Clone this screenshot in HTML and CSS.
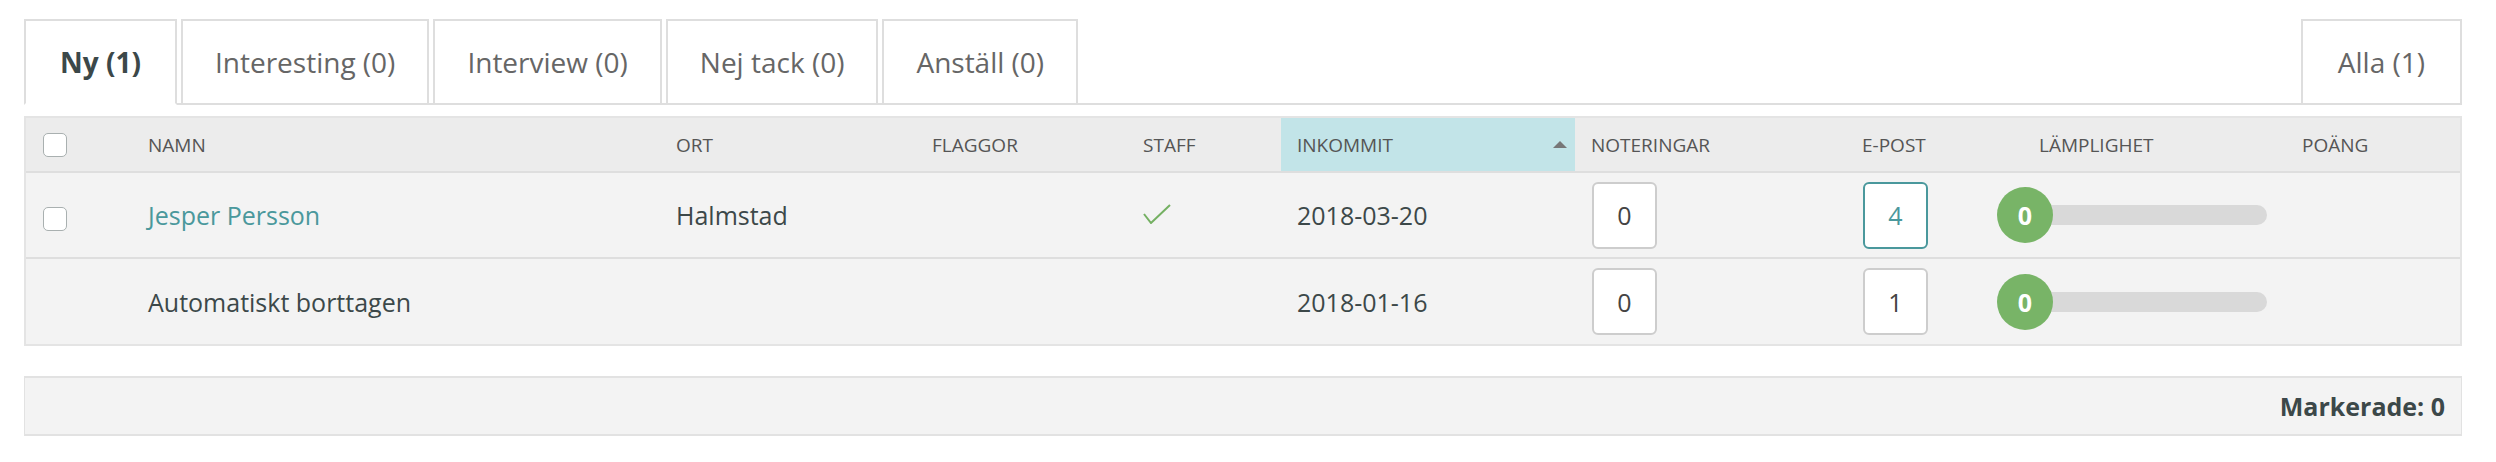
FILE: index.html
```html
<!DOCTYPE html>
<html lang="sv">
<head>
<meta charset="utf-8">
<title>Kandidater</title>
<link rel="stylesheet" href="styles.css">
</head>
<body>
<div class="page">
  <div class="tabs">
    <div class="tab active">Ny (1)</div>
    <div class="tab">Interesting (0)</div>
    <div class="tab">Interview (0)</div>
    <div class="tab">Nej tack (0)</div>
    <div class="tab">Anställ (0)</div>
    <div class="tab-spacer"></div>
    <div class="tab tab-all">Alla (1)</div>
  </div>

  <div class="grid">
    <table>
      <colgroup>
        <col class="w-check"><col class="w-name"><col class="w-ort"><col class="w-flag"><col class="w-staff">
        <col class="w-date"><col class="w-notes"><col class="w-mail"><col class="w-fit"><col class="w-score">
      </colgroup>
      <thead>
        <tr>
          <th class="c-check"><span class="cb"></span></th>
          <th>NAMN</th>
          <th>ORT</th>
          <th>FLAGGOR</th>
          <th>STAFF</th>
          <th class="sorted"><div class="sort-head"><span>INKOMMIT</span><span class="arrow"></span></div></th>
          <th>NOTERINGAR</th>
          <th>E-POST</th>
          <th>LÄMPLIGHET</th>
          <th>POÄNG</th>
        </tr>
      </thead>
      <tbody>
        <tr>
          <td class="c-check"><span class="cb"></span></td>
          <td><a class="name-link" href="#">Jesper Persson</a></td>
          <td>Halmstad</td>
          <td></td>
          <td><svg class="check" width="28" height="20" viewBox="0 0 28 20"><polyline points="1,10 8,19 27,1" fill="none" stroke="#74b062" stroke-width="2"/></svg></td>
          <td>2018-03-20</td>
          <td><span class="count">0</span></td>
          <td><span class="count active">4</span></td>
          <td><div class="meter"><span class="meter-dot">0</span></div></td>
          <td></td>
        </tr>
        <tr>
          <td class="c-check"></td>
          <td>Automatiskt borttagen</td>
          <td></td>
          <td></td>
          <td></td>
          <td>2018-01-16</td>
          <td><span class="count">0</span></td>
          <td><span class="count">1</span></td>
          <td><div class="meter"><span class="meter-dot">0</span></div></td>
          <td></td>
        </tr>
      </tbody>
    </table>
  </div>

  <div class="footer">Markerade: 0</div>
</div>
</body>
</html>
```
FILE: styles.css
```css
* { box-sizing: border-box; }
html, body { margin: 0; background: #fff; }
body {
  font-family: "Open Sans", "Liberation Sans", sans-serif;
  color: #3c4849;
}
.page {
  padding: 19px 34px 0 24px;
}

/* Tabs */
.tabs {
  display: flex;
  align-items: flex-end;
  border-bottom: 2px solid #dedede;
  height: 86px;
}
.tab {
  height: 86px;
  margin-bottom: -2px;
  margin-right: 4px;
  padding: 0 32px;
  border: 2px solid #dedede;
  background: #fff;
  font-size: 28px;
  color: #666;
  display: flex;
  align-items: center;
}
.tab.active {
  padding: 0 34px;
  font-weight: 700;
  color: #3c4849;
  border-bottom-color: #fff;
}
.tab.tab-all { padding: 0 35px; }
.tab:last-child { margin-right: 0; }
.tab-spacer { flex: 1; }

/* Grid */
.grid {
  margin-top: 11px;
  border: 2px solid #e4e4e4;
}
table {
  width: 100%;
  border-collapse: collapse;
  table-layout: fixed;
}
.w-check { width: 106px; }
.w-name { width: 528px; }
.w-ort { width: 256px; }
.w-flag { width: 211px; }
.w-staff { width: 154px; }
.w-date { width: 294px; }
.w-notes { width: 271px; }
.w-mail { width: 177px; }
.w-fit { width: 263px; }
.w-score { width: 174px; }

th {
  height: 54px;
  background: #ececec;
  font-weight: 400;
  font-size: 19px;
  color: #555;
  text-align: left;
  padding: 0 0 0 16px;
  vertical-align: middle;
  border-bottom: 2px solid #dedede;
}
th.sorted { background: #c2e4e8; padding-right: 8px; }
.sort-head {
  display: flex;
  justify-content: space-between;
  align-items: center;
}
.arrow {
  width: 0; height: 0;
  border-left: 7px solid transparent;
  border-right: 7px solid transparent;
  border-bottom: 7px solid #777;
}
td {
  height: 86px;
  background: #f3f3f3;
  font-size: 25px;
  padding: 0 0 0 16px;
  vertical-align: middle;
  border-bottom: 2px solid #dedede;
  color: #3c4849;
}
tbody tr:last-child td { border-bottom: none; }
.c-check { padding-left: 17px; }
.cb {
  display: block;
  width: 24px;
  height: 24px;
  border: 1px solid #a9b0b0;
  border-radius: 5px;
  background: #fff;
}
td .cb { margin-top: 8px; }
.name-link { color: #4a989c; text-decoration: none; }
.check { display: block; margin-top: -2px; }

.count {
  display: flex;
  align-items: center;
  justify-content: center;
  width: 65px;
  height: 67px;
  border: 2px solid #cdcdcd;
  border-radius: 6px;
  background: #fff;
  font-size: 25px;
  color: #444;
  margin-left: 1px;
}
.count.active { border-color: #4a989c; color: #4a989c; }

.meter {
  position: relative;
  width: 242px;
  height: 20px;
  margin-left: -14px;
  border-radius: 10px;
  background: #d9d9d9;
}
.meter-dot {
  position: absolute;
  left: -28px;
  top: 50%;
  margin-top: -28px;
  width: 56px;
  height: 56px;
  border-radius: 50%;
  background: #78b467;
  color: #fff;
  font-weight: 700;
  font-size: 25px;
  display: flex;
  align-items: center;
  justify-content: center;
}

/* Footer */
.footer {
  margin-top: 30px;
  height: 60px;
  border: 2px solid #e2e2e2;
  border-left-width: 1px;
  border-right-width: 1px;
  background: #f3f3f3;
  display: flex;
  align-items: center;
  justify-content: flex-end;
  padding-right: 16px;
  font-size: 25px;
  font-weight: 700;
  color: #3c4849;
}
```
